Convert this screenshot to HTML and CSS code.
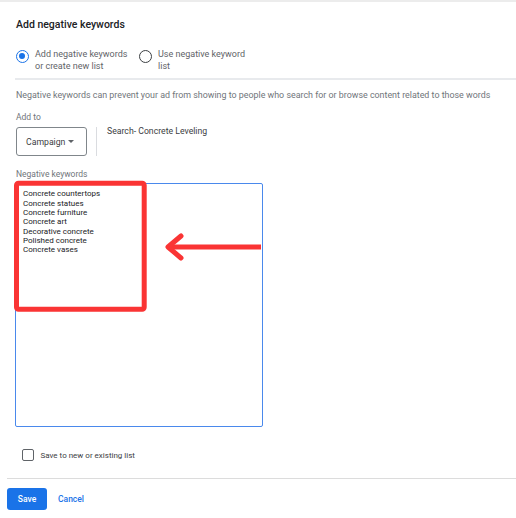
FILE: index.html
```html
<!DOCTYPE html>
<html lang="en">
<head>
  <meta charset="UTF-8">
  <title>Add negative keywords</title>
  <link rel="stylesheet" href="styles.css">
</head>
<body>

  <div class="top-rule"></div>

  <!-- header + list choice -->
  <div class="intro">
    <h2 class="title">Add negative keywords</h2>
    <div class="options">
      <label class="option option-first">
        <span class="radio checked"></span>
        <span class="option-text">Add negative keywords<br>or create new list</span>
      </label>
      <label class="option">
        <span class="radio"></span>
        <span class="option-text">Use negative keyword<br>list</span>
      </label>
    </div>
  </div>

  <div class="rule"></div>

  <!-- form body -->
  <div class="form">
    <p class="desc">Negative keywords can prevent your ad from showing to people who search for or browse content related to those words</p>

    <div class="field-label add-to">Add to</div>
    <div class="target-row">
      <div class="select">
        <span>Campaign</span>
        <span class="caret"></span>
      </div>
      <div class="divider"></div>
      <div class="target-name">Search- Concrete Leveling</div>
    </div>

    <div class="field-label kw-label">Negative keywords</div>
    <div class="kw-box">
      <div class="kw-lines">
        <div>Concrete countertops</div>
        <div>Concrete statues</div>
        <div>Concrete furniture</div>
        <div>Concrete art</div>
        <div>Decorative concrete</div>
        <div>Polished concrete</div>
        <div>Concrete vases</div>
      </div>

      <!-- annotation drawn over the box -->
      <svg class="markup" width="248" height="244" viewBox="0 0 248 244">
        <rect x="1.5" y="0.3" width="127.7" height="126" rx="2" fill="none" stroke="#fa3434" stroke-width="5"/>
        <line x1="153" y1="64" x2="246" y2="64" stroke="#fa3434" stroke-width="5"/>
        <polyline points="166,53 153,64 166,75" fill="none" stroke="#fa3434" stroke-width="5" stroke-linecap="round" stroke-linejoin="round"/>
      </svg>
    </div>

    <label class="check-row">
      <span class="checkbox"></span>
      <span>Save to new or existing list</span>
    </label>
  </div>

  <div class="footer-rule"></div>

  <div class="actions">
    <button class="btn-save">Save</button>
    <button class="btn-cancel">Cancel</button>
  </div>

</body>
</html>
```

FILE: styles.css
```css
/* base */
body {
  margin: 0;
  font-family: Roboto, "Liberation Sans", Arial, sans-serif;
  color: #3c4043;
  background: #fff;
}
.top-rule {
  height: 2px;
  background: #ececec;
}

/* header */
.intro {
  padding: 17px 16px 0 16px;
}
.title {
  margin: 0;
  font-size: 10.5px;
  font-weight: 500;
  line-height: 12px;
  color: #202124;
}
.options {
  display: flex;
  margin-top: 18px;
}
.option {
  display: flex;
  gap: 6px;
  align-items: flex-start;
}
.option-first {
  width: 123px;
}
.option-text {
  font-size: 9px;
  line-height: 11.7px;
  color: #5f6368;
}
.radio {
  box-sizing: border-box;
  width: 13px;
  height: 13px;
  margin-top: 1px;
  border: 1.6px solid #3c4043;
  border-radius: 50%;
  position: relative;
  flex: none;
}
.radio.checked {
  border-color: #1a73e8;
}
.radio.checked::after {
  content: "";
  position: absolute;
  left: 2px;
  top: 2px;
  width: 5.8px;
  height: 5.8px;
  border-radius: 50%;
  background: #1a73e8;
}
.rule {
  height: 2px;
  margin: 6px 0 0 15px;
  background: #e8eaed;
}

/* form */
.form {
  padding: 9px 16px 0 16px;
}
.desc {
  margin: 0;
  font-size: 8.9px;
  line-height: 12px;
  color: #70757a;
}
.field-label {
  font-size: 8.5px;
  line-height: 12px;
  color: #70757a;
}
.add-to {
  margin-top: 10px;
}
.target-row {
  display: flex;
  align-items: flex-start;
  margin-top: 4px;
}
.select {
  box-sizing: border-box;
  width: 71px;
  height: 29px;
  border: 1px solid #80868b;
  border-radius: 3px;
  display: flex;
  align-items: center;
  gap: 3px;
  padding-left: 9px;
  font-size: 8.7px;
  color: #3c4043;
}
.caret {
  width: 0;
  height: 0;
  border-left: 3px solid transparent;
  border-right: 3px solid transparent;
  border-top: 3px solid #5f6368;
}
.divider {
  width: 1px;
  height: 29px;
  margin: 0 10px 0 9px;
  background: #dadce0;
}
.target-name {
  margin-top: -2px;
  font-size: 8.7px;
  line-height: 12px;
  color: #3c4043;
}
.kw-label {
  margin-top: 12px;
}
.kw-box {
  position: relative;
  box-sizing: border-box;
  width: 248px;
  height: 244px;
  margin: 3px 0 0 -1px;
  border: 1px solid #4a89ec;
  border-radius: 2px;
  padding: 5px 7px;
}
.kw-lines {
  font-size: 8px;
  line-height: 9.33px;
  color: #202124;
}
.markup {
  position: absolute;
  left: -1px;
  top: -1px;
  overflow: visible;
}
.check-row {
  display: flex;
  align-items: center;
  gap: 7px;
  margin: 22px 0 0 6px;
  font-size: 8px;
  color: #3c4043;
}
.checkbox {
  box-sizing: border-box;
  width: 11.5px;
  height: 11.5px;
  border: 1.5px solid #5f6368;
  border-radius: 2px;
}

/* footer */
.footer-rule {
  height: 1px;
  margin: 17px 0 0 7px;
  background: #dcdcdc;
}
.actions {
  display: flex;
  align-items: center;
  gap: 11px;
  padding: 9px 0 0 7px;
}
.actions button {
  font-family: inherit;
  font-size: 8.5px;
  font-weight: 500;
  border: none;
  cursor: pointer;
}
.btn-save {
  width: 40px;
  height: 22px;
  border-radius: 3px;
  background: #1a73e8;
  color: #fff;
}
.btn-cancel {
  background: none;
  padding: 0;
  color: #1a73e8;
}
```
